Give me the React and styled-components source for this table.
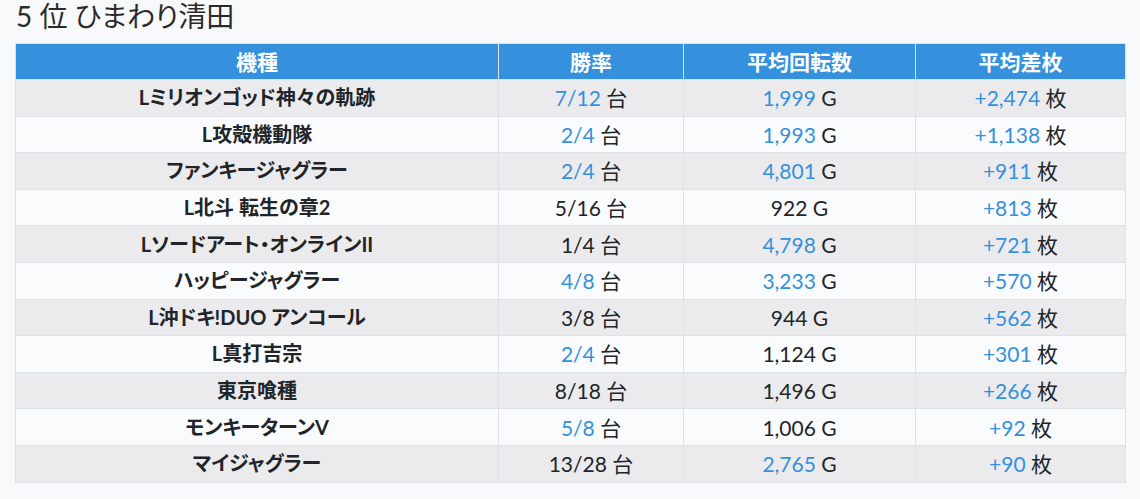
import styled, { createGlobalStyle } from 'styled-components';

const GlobalStyle = createGlobalStyle`
  body {
    margin: 0;
    background: #f8f9fa;
    color: #212529;
    font-family: Lato, "Noto Sans CJK JP", sans-serif;
    font-feature-settings: "palt";
  }
`;

const rows = [
  { name: 'Lミリオンゴッド神々の軌跡', win: '7/12', winHi: true, spin: '1,999', spinHi: true, diff: '+2,474' },
  { name: 'L攻殻機動隊', win: '2/4', winHi: true, spin: '1,993', spinHi: true, diff: '+1,138' },
  { name: 'ファンキージャグラー', win: '2/4', winHi: true, spin: '4,801', spinHi: true, diff: '+911' },
  { name: 'L北斗 転生の章2', win: '5/16', winHi: false, spin: '922', spinHi: false, diff: '+813' },
  { name: 'Lソードアート・オンラインII', win: '1/4', winHi: false, spin: '4,798', spinHi: true, diff: '+721' },
  { name: 'ハッピージャグラー', win: '4/8', winHi: true, spin: '3,233', spinHi: true, diff: '+570' },
  { name: 'L沖ドキ!DUO アンコール', win: '3/8', winHi: false, spin: '944', spinHi: false, diff: '+562' },
  { name: 'L真打吉宗', win: '2/4', winHi: true, spin: '1,124', spinHi: false, diff: '+301' },
  { name: '東京喰種', win: '8/18', winHi: false, spin: '1,496', spinHi: false, diff: '+266' },
  { name: 'モンキーターンV', win: '5/8', winHi: true, spin: '1,006', spinHi: false, diff: '+92' },
  { name: 'マイジャグラー', win: '13/28', winHi: false, spin: '2,765', spinHi: true, diff: '+90' },
];

const Page = styled.div`
  padding: 0 15px;
`;

const Title = styled.h3`
  margin: 0 0 11px 1px;
  font-size: 28px;
  font-weight: 400;
  line-height: 32px;
  color: #2b2b2b;
`;

const Table = styled.table`
  width: 1110px;
  border-collapse: collapse;
  table-layout: fixed;
  border: 1px solid #dee2e6;
  font-size: 21px;
`;

const Head = styled.th`
  background: #3590dd;
  color: #fff;
  font-size: 21px;
  font-weight: 700;
  line-height: 27px;
  padding: 4px 8px;
  border: 1px solid #dee2e6;
  border-top: 0;
  text-align: center;
`;

const Row = styled.tr`
  background: ${p => (p.$odd ? '#ebebed' : '#fafbfc')};
`;

const Cell = styled.td`
  line-height: 27px;
  padding: 4.3px 8px;
  border: 1px solid #dee2e6;
  text-align: center;
  white-space: nowrap;
`;

const Name = styled(Cell)`
  font-size: 20px;
  font-weight: 700;
`;

const Num = styled.span`
  color: ${p => (p.$hi ? '#3590dd' : '#212529')};
`;

const Unit = styled.span`
  color: #212529;
`;

function Value({ value, hi, unit }) {
  return (
    <>
      <Num $hi={hi}>{value}</Num> <Unit>{unit}</Unit>
    </>
  );
}

export default function App() {
  return (
    <Page>
      <GlobalStyle />
      <Title>5 位 ひまわり清田</Title>
      <Table>
        <colgroup>
          <col style={{ width: 483 }} />
          <col style={{ width: 185 }} />
          <col style={{ width: 232 }} />
          <col style={{ width: 210 }} />
        </colgroup>
        <thead>
          <tr>
            <Head>機種</Head>
            <Head>勝率</Head>
            <Head>平均回転数</Head>
            <Head>平均差枚</Head>
          </tr>
        </thead>
        <tbody>
          {rows.map((r, i) => (
            <Row key={r.name} $odd={i % 2 === 0}>
              <Name>{r.name}</Name>
              <Cell><Value value={r.win} hi={r.winHi} unit="台" /></Cell>
              <Cell><Value value={r.spin} hi={r.spinHi} unit="G" /></Cell>
              <Cell><Value value={r.diff} hi unit="枚" /></Cell>
            </Row>
          ))}
        </tbody>
      </Table>
    </Page>
  );
}
